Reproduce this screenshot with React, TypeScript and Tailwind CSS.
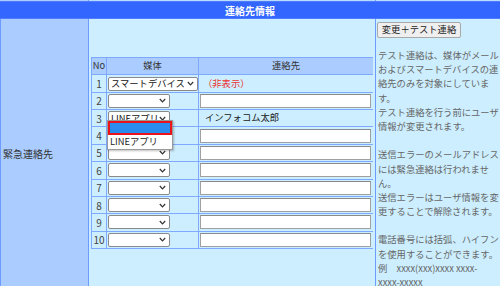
const FONT = "font-['Noto_Sans_CJK_JP','Noto_Sans',sans-serif]";

function Chevron() {
  return (
    <svg width="7" height="5" viewBox="0 0 7 5" className="flex-none">
      <polyline points="0.8,1 3.5,3.8 6.2,1" fill="none" stroke="#333" strokeWidth="1.2" />
    </svg>
  );
}

function Select({ value, wide }: { value?: string; wide?: boolean }) {
  return (
    <div
      className={`h-[14px] bg-white border border-[#8a8a8a] rounded-[2px] flex items-center justify-between pl-[2px] pr-[3px] text-[#111] leading-none ${
        wide ? "w-[90px]" : "w-[62px]"
      }`}
    >
      <span className="whitespace-nowrap">{value}</span>
      <Chevron />
    </div>
  );
}

function TextBox() {
  return <div className="h-[14px] w-[171px] bg-white border border-[#a0a0a0] border-t-[#8a8a8a]" />;
}

function Dropdown() {
  return (
    <div className="absolute top-[9px] left-[-1px] w-[66px] bg-white border border-[#9a9a9a] shadow-[1px_1px_2px_rgba(0,0,0,0.25)] z-10">
      <div className="h-[14px] bg-[#2b8cf0] border-2 border-[#e8141a]" />
      <div className="h-[14px] flex items-center pl-[2px] text-[#222] whitespace-nowrap">LINEアプリ</div>
    </div>
  );
}

const rows = Array.from({ length: 10 }, (_, i) => i + 1);

function ContactTable() {
  return (
    <div className="w-[282px] h-[192px] bg-[#7fa9ff] p-px grid grid-cols-[14px_91px_174px] grid-rows-[repeat(11,minmax(0,1fr))] gap-px">
      <div className="bg-[#aaccff] flex items-center justify-center text-[#333]">No</div>
      <div className="bg-[#aaccff] flex items-center justify-center text-[#333]">媒体</div>
      <div className="bg-[#aaccff] flex items-center justify-center text-[#333]">連絡先</div>
      {rows.map((n) => (
        <div key={n} className="contents">
          <div className="bg-[#cceeff] flex items-center justify-center text-[#444] text-[10px]">{n}</div>
          <div className="bg-[#cceeff] flex items-center pl-px">
            {n === 1 ? (
              <Select value="スマートデバイス" wide />
            ) : n === 3 ? (
              <div className="relative">
                <Select value="LINEアプリ" />
                <Dropdown />
              </div>
            ) : (
              <Select />
            )}
          </div>
          <div className="bg-[#cceeff] flex items-center pl-px">
            {n === 1 ? (
              <span className="pl-[3px] text-[#ee3333]">（非表示）</span>
            ) : n === 3 ? (
              <span className="pl-[5px] text-[#222]">インフォコム太郎</span>
            ) : (
              <TextBox />
            )}
          </div>
        </div>
      ))}
    </div>
  );
}

const notes = [
  "テスト連絡は、媒体がメール",
  "およびスマートデバイスの連",
  "絡先のみを対象にしていま",
  "す。",
  "テスト連絡を行う前にユーザ",
  "情報が変更されます。",
  "",
  "送信エラーのメールアドレス",
  "には緊急連絡は行われませ",
  "ん。",
  "送信エラーはユーザ情報を変",
  "更することで解除されます。",
  "",
  "電話番号には括弧、ハイフン",
  "を使用することができます。",
  "例　xxxx(xxx)xxxx xxxx-",
  "xxxx-xxxxx",
];

export default function App() {
  return (
    <div className={`w-[500px] h-[286px] overflow-hidden bg-[#cceeff] text-[9.3px] ${FONT}`}>
      <div className="flex h-px">
        <div className="w-[89px] bg-[#aaccff] border-r border-[#6e9bff]" />
        <div className="w-[287px] bg-[#b8dcff] border-r border-[#6e9bff]" />
        <div className="flex-1 bg-[#b8dcff]" />
      </div>
      <div className="h-[18px] bg-[#3366ff] border-y border-[#4f7cff] flex items-center justify-center text-white font-bold text-[10px]">
        連絡先情報
      </div>
      <div className="flex h-[268px]">
        <div className="w-[89px] flex-none bg-[#aaccff] border-l border-r border-[#6e9bff] flex items-center pl-[2px] text-[#333] text-[10px]">
          緊急連絡先
        </div>
        <div className="w-[287px] flex-none border-r border-[#6e9bff] flex items-center pl-[2px]">
          <ContactTable />
        </div>
        <div className="flex-1 pl-px pt-[3px]">
          <div className="w-[84px] h-[16px] bg-[#efefef] border border-[#a8a8a8] rounded-[2px] flex items-center justify-center text-[#222] whitespace-nowrap">
            変更＋テスト連絡
          </div>
          <div className="mt-[10px] pl-px text-[#666] leading-[14.2px]">
            {notes.map((line, i) => (
              <div key={i} className="h-[14.2px] whitespace-nowrap">
                {line}
              </div>
            ))}
          </div>
        </div>
      </div>
    </div>
  );
}
